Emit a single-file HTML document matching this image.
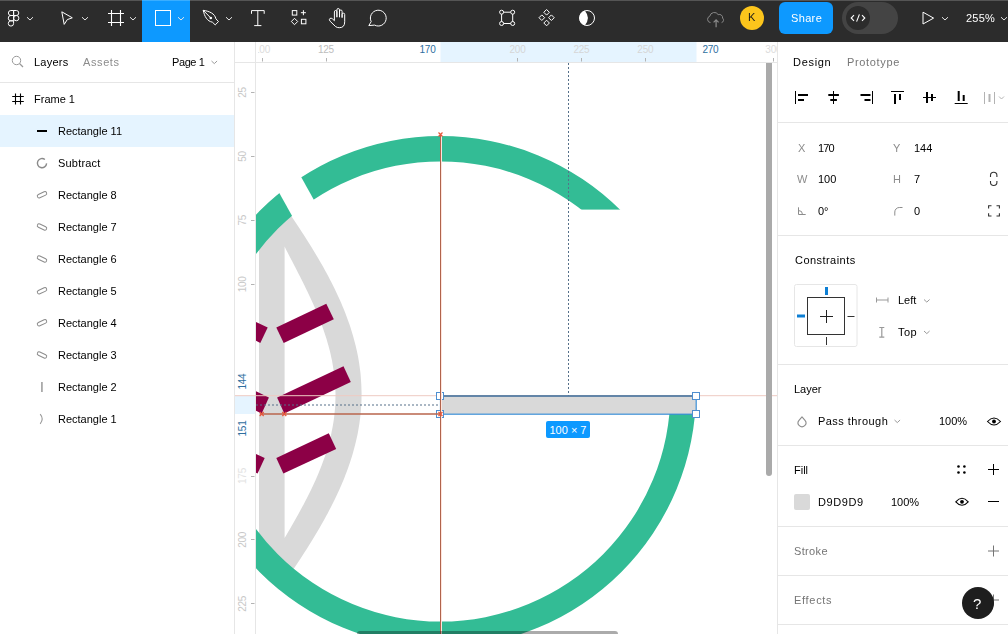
<!DOCTYPE html>
<html><head><meta charset="utf-8">
<style>
*{margin:0;padding:0;box-sizing:border-box}
html,body{width:1008px;height:634px;overflow:hidden;background:#fff;font-family:"Liberation Sans",sans-serif;font-size:11px;color:#000}
.a{position:absolute}
.t{position:absolute;white-space:pre;line-height:1;will-change:transform}
#tb{left:0;top:0;width:1008px;height:42px;background:#2c2c2c;border-top:1px solid #555}
#lp{left:0;top:42px;width:235px;height:592px;background:#fff;border-right:1px solid #e6e6e6}
#rp{left:777px;top:42px;width:231px;height:592px;background:#fff;border-left:1px solid #e6e6e6}
.div{position:absolute;height:1px;background:#e6e6e6}
.g{color:#8c8c8c}
</style></head><body>
<!-- canvas -->
<svg class="a" style="left:0;top:0" width="1008" height="634" viewBox="0 0 1008 634">
<defs>
<clipPath id="cv"><rect x="256" y="63" width="521" height="571"/></clipPath>
<clipPath id="circ"><circle cx="440.5" cy="391.5" r="255.5"/></clipPath>
<mask id="gm" maskUnits="userSpaceOnUse" x="0" y="0" width="1008" height="634">
<rect x="0" y="0" width="1008" height="634" fill="#fff"/>
<rect x="445" y="209.6" width="300" height="204.4" fill="#000"/>
<polygon points="281.66,141.94 339.98,246.82 318.28,263.02 259.96,158.14" fill="#000"/>
</mask>
</defs>
<g clip-path="url(#cv)">
<path clip-path="url(#circ)" fill="#d9d9d9" fill-rule="evenodd" d="M259,168.5 L258.8,168.5 L260.8,171.5 L262.9,174.5 L264.9,177.5 L267.0,180.5 L269.1,183.5 L271.1,186.5 L273.2,189.5 L275.2,192.5 L277.3,195.5 L279.4,198.5 L281.4,201.5 L283.5,204.5 L285.5,207.5 L287.6,210.5 L289.6,213.5 L291.6,216.5 L293.6,219.5 L295.6,222.5 L297.6,225.5 L299.6,228.5 L301.5,231.5 L303.5,234.5 L305.4,237.5 L307.3,240.5 L309.2,243.5 L311.1,246.5 L312.9,249.5 L314.7,252.5 L316.5,255.5 L318.3,258.5 L320.0,261.5 L321.8,264.5 L323.5,267.5 L325.1,270.5 L326.8,273.5 L328.4,276.5 L329.9,279.5 L331.5,282.5 L333.0,285.5 L334.5,288.5 L335.9,291.5 L337.3,294.5 L338.7,297.5 L340.1,300.5 L341.4,303.5 L342.6,306.5 L343.9,309.5 L345.1,312.5 L346.2,315.5 L347.3,318.5 L348.4,321.5 L349.5,324.5 L350.5,327.5 L351.4,330.5 L352.3,333.5 L353.2,336.5 L354.0,339.5 L354.8,342.5 L355.6,345.5 L356.3,348.5 L357.0,351.5 L357.6,354.5 L358.2,357.5 L358.7,360.5 L359.2,363.5 L359.6,366.5 L360.0,369.5 L360.4,372.5 L360.7,375.5 L360.9,378.5 L361.1,381.5 L361.3,384.5 L361.4,387.5 L361.5,390.5 L361.6,393.5 L361.5,396.5 L361.5,399.5 L361.4,402.5 L361.2,405.5 L361.0,408.5 L360.8,411.5 L360.5,414.5 L360.2,417.5 L359.8,420.5 L359.4,423.5 L358.9,426.5 L358.4,429.5 L357.9,432.5 L357.3,435.5 L356.6,438.5 L355.9,441.5 L355.2,444.5 L354.4,447.5 L353.6,450.5 L352.8,453.5 L351.9,456.5 L350.9,459.5 L350.0,462.5 L348.9,465.5 L347.9,468.5 L346.8,471.5 L345.6,474.5 L344.5,477.5 L343.3,480.5 L342.0,483.5 L340.7,486.5 L339.4,489.5 L338.0,492.5 L336.6,495.5 L335.2,498.5 L333.7,501.5 L332.2,504.5 L330.7,507.5 L329.1,510.5 L327.6,513.5 L325.9,516.5 L324.3,519.5 L322.6,522.5 L320.9,525.5 L319.2,528.5 L317.4,531.5 L315.6,534.5 L313.8,537.5 L312.0,540.5 L310.1,543.5 L308.3,546.5 L306.4,549.5 L304.4,552.5 L302.5,555.5 L300.6,558.5 L298.6,561.5 L296.6,564.5 L294.6,567.5 L292.6,570.5 L290.6,573.5 L288.6,576.5 L286.5,579.5 L284.5,582.5 L282.4,585.5 L280.4,588.5 L278.3,591.5 L276.3,594.5 L274.2,597.5 L272.1,600.5 L270.1,603.5 L268.0,606.5 L266.0,609.5 L263.9,612.5 L261.9,615.5 L259.8,618.5 L259.1,619.5 L259,619.5Z M284.6,246.5 L284.6,246.5 L286.0,249.5 L287.6,252.5 L289.1,255.5 L290.7,258.5 L292.3,261.5 L293.8,264.5 L295.4,267.5 L296.9,270.5 L298.4,273.5 L300.0,276.5 L301.5,279.5 L303.0,282.5 L304.5,285.5 L305.9,288.5 L307.4,291.5 L308.8,294.5 L310.2,297.5 L311.6,300.5 L313.0,303.5 L314.3,306.5 L315.6,309.5 L316.8,312.5 L318.1,315.5 L319.3,318.5 L320.4,321.5 L321.6,324.5 L322.7,327.5 L323.7,330.5 L324.7,333.5 L325.7,336.5 L326.7,339.5 L327.5,342.5 L328.4,345.5 L329.2,348.5 L330.0,351.5 L330.7,354.5 L331.3,357.5 L332.0,360.5 L332.5,363.5 L333.0,366.5 L333.5,369.5 L333.9,372.5 L334.3,375.5 L334.6,378.5 L334.9,381.5 L335.1,384.5 L335.3,387.5 L335.4,390.5 L335.5,393.5 L335.5,396.5 L335.4,399.5 L335.3,402.5 L335.2,405.5 L335.0,408.5 L334.7,411.5 L334.4,414.5 L334.1,417.5 L333.7,420.5 L333.2,423.5 L332.7,426.5 L332.1,429.5 L331.5,432.5 L330.9,435.5 L330.1,438.5 L329.4,441.5 L328.6,444.5 L327.7,447.5 L326.8,450.5 L325.9,453.5 L324.9,456.5 L323.8,459.5 L322.7,462.5 L321.6,465.5 L320.4,468.5 L319.2,471.5 L318.0,474.5 L316.7,477.5 L315.4,480.5 L314.0,483.5 L312.6,486.5 L311.2,489.5 L309.7,492.5 L308.2,495.5 L306.7,498.5 L305.1,501.5 L303.6,504.5 L301.9,507.5 L300.3,510.5 L298.7,513.5 L297.0,516.5 L295.3,519.5 L293.6,522.5 L291.9,525.5 L290.2,528.5 L288.4,531.5 L286.7,534.5 L284.9,537.5 L284.6,538.0 Z"/>
<g fill="#8c0046">
<polygon points="276.3,327.4 326.3,303.8 333.8,319.3 283.7,342.9"/>
<polygon points="267.7,327.4 217.7,303.8 210.2,319.3 260.3,342.9"/>
<polygon points="277.1,397.4 343.5,366.3 350.8,382 284.3,413.4"/>
<polygon points="268.9,397.4 202.5,366.3 195.2,382 261.7,413.4"/>
<polygon points="276.3,458 328.8,433.3 336.2,449 283.4,473.4"/>
<polygon points="264.7,458 212.2,433.3 204.8,449 257.6,473.4"/>
</g>
<path mask="url(#gm)" fill="#33bc95" fill-rule="evenodd" d="M185,391.5a255.5,255.5 0 1,0 511,0a255.5,255.5 0 1,0 -511,0Z M210.5,391.5a230,230 0 1,0 460,0a230,230 0 1,0 -460,0Z"/>
<rect x="440.5" y="396" width="255.5" height="18" fill="#d9d9d9"/>
</g>
</svg>


<svg class="a" style="left:0;top:0" width="1008" height="634" viewBox="0 0 1008 634" font-family="Liberation Sans" font-size="10" letter-spacing="-0.25">
<defs><clipPath id="hr"><rect x="258" y="41" width="519" height="21"/></clipPath>
<clipPath id="vr"><rect x="235" y="63" width="20" height="571"/></clipPath>
<linearGradient id="fadeL" x1="0" x2="1" y1="0" y2="0"><stop offset="0" stop-color="#fff" stop-opacity="1"/><stop offset="1" stop-color="#fff" stop-opacity="0"/></linearGradient>
</defs>
<rect x="235" y="42" width="542" height="20" fill="#fff"/>
<rect x="235" y="63" width="20" height="571" fill="#fff"/>
<rect x="440.5" y="42" width="256" height="20" fill="#e5f4ff"/>
<rect x="235" y="396" width="20" height="18" fill="#e5f4ff"/>
<line x1="235" y1="62.5" x2="777" y2="62.5" stroke="#e6e6e6"/>
<line x1="255.5" y1="41" x2="255.5" y2="634" stroke="#e6e6e6"/>
<g clip-path="url(#hr)">
<text x="262" y="53" text-anchor="middle" fill="#dcdcdc">100</text><text x="325.9" y="53" text-anchor="middle" fill="#bdbdbd">125</text><text x="517.5" y="53" text-anchor="middle" fill="#d6d6d6">200</text><text x="581.4" y="53" text-anchor="middle" fill="#d6d6d6">225</text><text x="645.3" y="53" text-anchor="middle" fill="#d6d6d6">250</text><text x="773.3" y="53" text-anchor="middle" fill="#dcdcdc">300</text><text x="435.5" y="53" text-anchor="end" fill="#2f6f9f">170</text><text x="702.5" y="53" fill="#2f6f9f">270</text><g stroke="#b3b3b3"><line x1="262.5" y1="58" x2="262.5" y2="61.5"/><line x1="326.5" y1="58" x2="326.5" y2="61.5"/><line x1="517.5" y1="58" x2="517.5" y2="61.5"/><line x1="581.5" y1="58" x2="581.5" y2="61.5"/><line x1="645.5" y1="58" x2="645.5" y2="61.5"/><line x1="773.5" y1="58" x2="773.5" y2="61.5"/></g></g>
<g clip-path="url(#vr)"><text transform="translate(246,92.5) rotate(-90)" x="0" y="0" text-anchor="middle" fill="#c8c8c8">25</text><text transform="translate(246,156.4) rotate(-90)" x="0" y="0" text-anchor="middle" fill="#c8c8c8">50</text><text transform="translate(246,220.3) rotate(-90)" x="0" y="0" text-anchor="middle" fill="#c8c8c8">75</text><text transform="translate(246,284.3) rotate(-90)" x="0" y="0" text-anchor="middle" fill="#c8c8c8">100</text><text transform="translate(246,476) rotate(-90)" x="0" y="0" text-anchor="middle" fill="#e3e3e3">175</text><text transform="translate(246,539.9) rotate(-90)" x="0" y="0" text-anchor="middle" fill="#c8c8c8">200</text><text transform="translate(246,603.8) rotate(-90)" x="0" y="0" text-anchor="middle" fill="#c8c8c8">225</text><text transform="translate(246,389.5) rotate(-90)" fill="#2f6f9f">144</text><text transform="translate(246,420.5) rotate(-90)" text-anchor="end" fill="#2f6f9f">151</text><g stroke="#b3b3b3"><line x1="251" y1="92.5" x2="254.5" y2="92.5"/><line x1="251" y1="156.5" x2="254.5" y2="156.5"/><line x1="251" y1="220.5" x2="254.5" y2="220.5"/><line x1="251" y1="284.5" x2="254.5" y2="284.5"/><line x1="251" y1="476.5" x2="254.5" y2="476.5"/><line x1="251" y1="539.5" x2="254.5" y2="539.5"/><line x1="251" y1="603.5" x2="254.5" y2="603.5"/></g></g>
</svg>
<!-- guides overlay -->
<svg class="a" style="left:0;top:0" width="1008" height="634" viewBox="0 0 1008 634">
<defs><clipPath id="cv2"><rect x="234" y="63" width="543" height="571"/></clipPath></defs>
<g clip-path="url(#cv2)">
<line x1="234" y1="395.7" x2="777" y2="395.7" stroke="#eecac2" stroke-width="1"/>
<line x1="256" y1="405" x2="440" y2="405" stroke="#56708a" stroke-width="1.1" stroke-dasharray="2,2"/>
<line x1="568.5" y1="63" x2="568.5" y2="396" stroke="#56708a" stroke-width="1" stroke-dasharray="2,2"/>
<rect x="440.5" y="396" width="255.7" height="18.2" fill="none" stroke="#3b8fd6" stroke-width="1.2"/>
<line x1="440.5" y1="396" x2="696" y2="396" stroke="#5a7898" stroke-width="1.3"/>
<g fill="#fff" stroke="#4f8fd0" stroke-width="1">
<rect x="436.5" y="392.5" width="7" height="7"/>
<rect x="436.5" y="410.5" width="7" height="7"/>
<rect x="692.5" y="392.5" width="7" height="7"/>
<rect x="692.5" y="410.5" width="7" height="7"/>
</g>
<line x1="440.5" y1="134" x2="440.5" y2="634" stroke="#b0634c" stroke-width="1"/>
<line x1="441.5" y1="134" x2="441.5" y2="634" stroke="#ffe4dc" stroke-width="1"/>
<line x1="260" y1="414" x2="440" y2="414" stroke="#b8654c" stroke-width="1.4"/>
<g stroke="#e8553a" stroke-width="1.2">
<path d="M438.5,132.5l4,4M442.5,132.5l-4,4"/>
<path d="M438.5,412l4,4M442.5,412l-4,4"/>
<path d="M259.7,412l4,4M263.7,412l-4,4"/>
<path d="M282.3,412l4,4M286.3,412l-4,4"/>
</g>
</g>
<rect x="546" y="421" width="44" height="17" rx="2" fill="#0d99ff"/>
<text x="568" y="434" text-anchor="middle" font-family="Liberation Sans" font-size="11" fill="#fff">100 × 7</text>
<!-- scrollbars -->
<path d="M766,63H772V473A3,3 0 0 1 766,473Z" fill="#aaaaaa"/>
<rect x="357" y="631" width="261" height="6" rx="3" fill="#000" fill-opacity="0.33"/>
</svg>
<div id="tb" class="a">
<div class="a" style="left:142px;top:-1px;width:48px;height:42px;background:#0d99ff;border-top:1px solid #3aaeff"></div>
<div class="a" style="left:779px;top:1px;width:54px;height:32px;background:#0d99ff;border-radius:6px"></div>
<div class="t" style="left:791.2px;top:12px;font-size:11px;color:#fff;letter-spacing:0.35px">Share</div>
<div class="a" style="left:842px;top:1px;width:56px;height:32px;background:#444;border-radius:16px"></div>
<div class="a" style="left:846px;top:5px;width:24px;height:24px;background:#2c2c2c;border-radius:12px"></div>
<div class="a" style="left:740px;top:5px;width:24px;height:24px;background:#fcc51c;border-radius:12px"></div>
<div class="t" style="left:748px;top:11px;font-size:11px;color:#1a1a1a">K</div>
<div class="t" style="left:966px;top:12px;font-size:11px;color:#fff;letter-spacing:0.2px">255%</div>
</div>
<svg class="a" style="left:0;top:0" width="1008" height="41" viewBox="0 0 1008 41" fill="none" stroke="#fff" stroke-width="1">
<!-- figma logo -->
<path d="M13.6,10.5H10.9a2.5,2.5 0 0 0 0,5H13.6ZM13.6,10.5H16.3a2.5,2.5 0 0 1 0,5H13.6ZM13.6,15.5H10.9a2.65,2.65 0 0 0 0,5.3H13.6ZM13.6,20.8H10.9a2.65,2.65 0 1 0 2.7,2.65ZM16.25,18.15m-2.65,0a2.65,2.65 0 1 0 5.3,0a2.65,2.65 0 1 0 -5.3,0"/>
<g stroke="#e6e6e6">
<path d="M27,17.2l3,2.8l3,-2.8"/>
<path d="M82,17.2l3,2.8l3,-2.8"/>
<path d="M130,17.2l3,2.8l3,-2.8"/>
<path d="M178,17.2l3,2.8l3,-2.8"/>
<path d="M226,17.2l3,2.8l3,-2.8"/>
<path d="M942,17.2l3,2.8l3,-2.8"/>
<path d="M1001,17.2l3,2.8l3,-2.8"/>
</g>
<!-- move -->
<path d="M61.8,11.8L72.3,17.8L67.3,19.6L64.2,24.4Z" stroke-linejoin="miter"/>
<!-- frame -->
<path d="M111.5,10v16M120.5,10v16M108,13.5h16M108,22.5h16" stroke-width="1.1"/>
<!-- rect -->
<rect x="155.5" y="10.5" width="15" height="15"/>
<!-- pen -->
<path d="M203.2,10.3C209.5,11.3 214.8,13.5 215.9,18.8L218.5,21.6L215.2,24.9L212.4,22.2C207.2,21.2 204.5,16.5 203.2,10.3Z"/>
<path d="M203.2,10.3L210.8,18"/>
<circle cx="210.8" cy="18" r="1.3" fill="#fff" stroke="none"/>
<!-- T -->
<path d="M251.5,13.8V10.6H264.2V13.8M257.8,10.6V25.6M254.2,25.6H261.4"/>
<!-- shapes -->
<rect x="292.3" y="10.6" width="4.5" height="4.5"/>
<path d="M303.4,10.2v5M300.9,12.7h5"/>
<path d="M294.5,18.3L297.7,21.5L294.5,24.7L291.3,21.5Z"/>
<rect x="301.4" y="19.3" width="4.5" height="4.5"/>
<!-- hand -->
<path d="M335.6,26.6L330.2,21.3Q328.6,19.6 329.9,18.5Q331.1,17.6 332.5,18.9L334.4,20.7V11.9Q334.4,10.5 335.6,10.5Q336.9,10.5 336.9,11.9V17.2V9.9Q336.9,8.5 338.2,8.5Q339.5,8.5 339.5,9.9V17.2V11.3Q339.5,10 340.8,10Q342.1,10 342.1,11.3V17.6V14.5Q342.1,13.2 343.4,13.2Q344.7,13.2 344.7,14.5V21.8Q344.7,27.7 339.3,27.7Q337.2,27.7 335.6,26.6Z" stroke-linejoin="round"/>
<!-- comment -->
<path d="M368.8,25.6L371.2,21.6A7.9,7.9 0 1 1 374.6,25.1Z"/>
<!-- transform -->
<path d="M501.6,12.2H512.7V23.5H501.6Z"/>
<g fill="#2c2c2c"><circle cx="501.6" cy="12.2" r="2"/><circle cx="512.7" cy="12.2" r="2"/><circle cx="501.6" cy="23.5" r="2"/><circle cx="512.7" cy="23.5" r="2"/></g>
<!-- components -->
<path d="M546.6,9.5l2.8,2.8l-2.8,2.8l-2.8,-2.8ZM541.8,14.9l2.8,2.8l-2.8,2.8l-2.8,-2.8ZM551.4,14.9l2.8,2.8l-2.8,2.8l-2.8,-2.8ZM546.6,20.2l2.8,2.8l-2.8,2.8l-2.8,-2.8Z"/>
<!-- contrast -->
<circle cx="587" cy="18" r="7.5"/>
<path d="M584.9,10.8A7.5,7.5 0 0 0 584.9,25.2Q590.9,18 584.9,10.8Z" fill="#fff" stroke="none"/>
<!-- cloud -->
<path d="M710.5,22.6A3.3,3.3 0 0 1 709.8,16.2A4.6,4.6 0 0 1 718.2,14.6A3.3,3.3 0 0 1 722.6,18.1A2.6,2.6 0 0 1 721.6,22.6" stroke="#8a8a8a"/>
<path d="M716.1,27.2V20.2M713.6,22.4L716.1,19.8L718.6,22.4" stroke="#8a8a8a" stroke-width="1.2"/>
<!-- code -->
<path d="M854,15.2l-2.8,2.8l2.8,2.8M862,15.2l2.8,2.8l-2.8,2.8M859.4,14.4l-2.8,7.2" stroke-width="1.1"/>
<!-- play -->
<path d="M923,12.2V24L933.6,18.1Z"/>
</svg>

<div id="lp" class="a">
<div class="div" style="left:0;top:40px;width:234px"></div>
<div class="a" style="left:0;top:73px;width:234px;height:32px;background:#e5f4ff"></div>
</div>
<div class="t" style="left:33.5px;top:57px;color:#000;letter-spacing:0.25px">Layers</div>
<div class="t" style="left:82.5px;top:57px;color:#8c8c8c;letter-spacing:0.6px">Assets</div>
<div class="t" style="left:172.0px;top:57px;color:#000;letter-spacing:-0.4px">Page 1</div>
<div class="t" style="left:33.5px;top:94.3px;color:#000">Frame 1</div>
<div class="t" style="left:57.6px;top:126.3px;color:#000">Rectangle 11</div>
<div class="t" style="left:57.6px;top:158.3px;color:#000;letter-spacing:0.2px">Subtract</div>
<div class="t" style="left:57.6px;top:190.3px;color:#000">Rectangle 8</div>
<div class="t" style="left:57.6px;top:222.3px;color:#000">Rectangle 7</div>
<div class="t" style="left:57.6px;top:254.3px;color:#000">Rectangle 6</div>
<div class="t" style="left:57.6px;top:286.3px;color:#000">Rectangle 5</div>
<div class="t" style="left:57.6px;top:318.3px;color:#000">Rectangle 4</div>
<div class="t" style="left:57.6px;top:350.3px;color:#000">Rectangle 3</div>
<div class="t" style="left:57.6px;top:382.3px;color:#000">Rectangle 2</div>
<div class="t" style="left:57.6px;top:414.3px;color:#000">Rectangle 1</div>
<svg class="a" style="left:0;top:41px" width="234" height="400" viewBox="0 41 234 400" fill="none" stroke="#8c8c8c" stroke-width="1">
<circle cx="16.5" cy="60.5" r="4.2" stroke="#999"/>
<path d="M19.5,63.5L23,67" stroke="#999" stroke-width="1.3"/>
<path d="M211.5,61l2.8,2.6l2.8,-2.6" stroke="#999"/>
<path d="M15.5,93.5v11M20.5,93.5v11M12.2,96.5h11.6M12.2,101.5h11.6" stroke="#000" stroke-width="1.1"/>
<rect x="37" y="130" width="10" height="2" fill="#000" stroke="none"/>
<path d="M46.6,163.4A4.6,4.6 0 1 1 44.9,159.5" stroke="#8a8a8a" stroke-width="1.4"/>
<g transform="translate(42,194.8) rotate(-25)"><rect x="-5" y="-1.8" width="10" height="3.6" rx="1.8"/></g>
<g transform="translate(42,227) rotate(25)"><rect x="-5" y="-1.8" width="10" height="3.6" rx="1.8"/></g>
<g transform="translate(42,259) rotate(25)"><rect x="-5" y="-1.8" width="10" height="3.6" rx="1.8"/></g>
<g transform="translate(42,290.8) rotate(-25)"><rect x="-5" y="-1.8" width="10" height="3.6" rx="1.8"/></g>
<g transform="translate(42,322.8) rotate(-25)"><rect x="-5" y="-1.8" width="10" height="3.6" rx="1.8"/></g>
<g transform="translate(42,355) rotate(25)"><rect x="-5" y="-1.8" width="10" height="3.6" rx="1.8"/></g>
<rect x="41" y="382" width="1.8" height="10" fill="#aaa" stroke="none"/>
<path d="M40.2,414.2Q44.2,419 40.2,423.8" stroke="#999" stroke-width="1.1"/>
</svg>

<div id="rp" class="a"></div>
<div class="div" style="left:778px;top:122px;width:230px"></div>
<div class="div" style="left:778px;top:235px;width:230px"></div>
<div class="div" style="left:778px;top:364px;width:230px"></div>
<div class="div" style="left:778px;top:445px;width:230px"></div>
<div class="div" style="left:778px;top:526px;width:230px"></div>
<div class="div" style="left:778px;top:575px;width:230px"></div>
<div class="div" style="left:778px;top:624px;width:230px"></div>
<div class="t" style="left:793.4px;top:57px;color:#000;letter-spacing:0.7px">Design</div>
<div class="t" style="left:846.8px;top:57px;color:#777;letter-spacing:0.65px">Prototype</div>
<div class="t" style="left:797.6px;top:142.6px;color:#8c8c8c;">X</div>
<div class="t" style="left:817.5px;top:142.6px;color:#000;letter-spacing:-0.9px">170</div>
<div class="t" style="left:893.3px;top:142.6px;color:#8c8c8c;">Y</div>
<div class="t" style="left:914.0px;top:142.6px;color:#000;">144</div>
<div class="t" style="left:796.6px;top:174px;color:#8c8c8c;">W</div>
<div class="t" style="left:817.5px;top:174px;color:#000;">100</div>
<div class="t" style="left:893.3px;top:174px;color:#8c8c8c;">H</div>
<div class="t" style="left:913.6px;top:174px;color:#000;">7</div>
<div class="t" style="left:817.5px;top:206px;color:#000;">0°</div>
<div class="t" style="left:913.6px;top:206px;color:#000;">0</div>
<div class="t" style="left:794.6px;top:255px;color:#000;letter-spacing:0.45px">Constraints</div>
<div class="t" style="left:897.6px;top:295px;color:#000;">Left</div>
<div class="t" style="left:897.6px;top:326.7px;color:#000;letter-spacing:0.5px">Top</div>
<div class="t" style="left:793.7px;top:384.3px;color:#000;">Layer</div>
<div class="t" style="left:817.5px;top:416px;color:#000;letter-spacing:0.45px">Pass through</div>
<div class="t" style="left:938.5px;top:416px;color:#000;">100%</div>
<div class="t" style="left:793.7px;top:465px;color:#000;">Fill</div>
<div class="t" style="left:817.5px;top:496.5px;color:#000;letter-spacing:0.6px">D9D9D9</div>
<div class="t" style="left:891.0px;top:496.5px;color:#000;">100%</div>
<div class="t" style="left:793.7px;top:546px;color:#757575;letter-spacing:0.35px">Stroke</div>
<div class="t" style="left:793.7px;top:595px;color:#757575;letter-spacing:0.7px">Effects</div>
<svg class="a" style="left:777px;top:41px" width="231" height="593" viewBox="777 41 231 593" fill="none" stroke="#000" stroke-width="1">
<!-- align -->
<path d="M795.5,91v13M798,95h10M798,100h6" stroke-width="1"/>

<g stroke-width="2"><path d="M798,95h10M798,100h6"/></g>
<path d="M833.5,91v13" /><path d="M828.3,95h10.6M830.3,100h6.6" stroke-width="2"/>
<path d="M872.5,91v13" /><path d="M860.5,95h10M864.5,100h6" stroke-width="2"/>
<path d="M891,91.5h13" /><path d="M895,94v10M900,94v6" stroke-width="2"/>
<path d="M923,97.5h13" /><path d="M927,92v11M932,94v7" stroke-width="2"/>
<path d="M954.7,103.5h13" /><path d="M958.7,91v10M963.7,95v6" stroke-width="2"/>
<g stroke="#b3b3b3"><path d="M984.5,92v12M994.5,92v12" /><path d="M989.5,94v8" stroke-width="2"/><path d="M999,96.5l2.5,2.5l2.5,-2.5"/></g>
<!-- constrain proportions -->
<path d="M990.5,177V175.5A3.2,3.2 0 0 1 996.9,175.5V177M990.5,181V182.3A3.2,3.2 0 0 0 996.9,182.3V181" stroke="#333" stroke-width="1.1"/>
<!-- rotation -->
<path d="M798.5,207.3V214.5H805.7M798.5,210.5A4,4 0 0 1 802.5,214.5" stroke="#8c8c8c"/>
<!-- corner radius -->
<path d="M894.8,215.6V212A4.5,4.5 0 0 1 899.3,207.5H902.5" stroke="#8c8c8c"/>
<!-- independent corners -->
<path d="M988.6,208.5V205.8H991.5M996.5,205.8H999.4V208.5M999.4,213.3V216H996.5M991.5,216H988.6V213.3" stroke="#333" stroke-width="1.1"/>
<!-- constraints box -->
<rect x="794.5" y="284.5" width="62.5" height="62" rx="2" stroke="#e6e6e6"/>
<rect x="807.5" y="297.5" width="37" height="37" stroke="#333"/>
<path d="M826.5,310v13M820,316.5h13" stroke="#222"/>
<path d="M826.5,287v8" stroke="#0d7fd4" stroke-width="3"/>
<path d="M797,316h8" stroke="#0d7fd4" stroke-width="3"/>
<path d="M847.5,316.5h7M826.5,337v8" stroke="#333"/>
<path d="M876.5,297.5v5M888,297.5v5M876.5,300h11.5" stroke="#999"/>
<path d="M881.8,327v10.6M879.3,327.5h5M879.3,337.1h5" stroke="#999" stroke-width="1.2"/>
<path d="M924,299.5l2.8,2.6l2.8,-2.6M924,331l2.8,2.6l2.8,-2.6M894.5,420l2.8,2.6l2.8,-2.6" stroke="#999"/>
<!-- drop -->
<path d="M802,416.8L805,420.3A3.9,3.9 0 1 1 799,420.3Z" stroke="#8c8c8c" stroke-width="1.1" stroke-linejoin="round"/>
<!-- eye -->
<path d="M987.5,421.5Q994,414.5 1000.5,421.5Q994,428.5 987.5,421.5Z" stroke-width="1.1"/>
<circle cx="994" cy="421.5" r="1.9" fill="#000" stroke="none"/>
<path d="M955.8,501.8Q962,494.8 968.2,501.8Q962,508.8 955.8,501.8Z" stroke-width="1.1"/>
<circle cx="962" cy="501.8" r="1.9" fill="#000" stroke="none"/>
<!-- dots -->
<g fill="#000" stroke="none"><circle cx="958.5" cy="466.5" r="1.3"/><circle cx="964.4" cy="466.5" r="1.3"/><circle cx="958.5" cy="472.5" r="1.3"/><circle cx="964.4" cy="472.5" r="1.3"/></g>
<path d="M993.5,464v11M988,469.5h11M988,501.5h11"/>
<path d="M993.5,545.5v11M988,551h11M993.5,594.5v11M988,600h11" stroke="#757575"/>
<!-- swatch -->
<rect x="794" y="494" width="16" height="16" rx="2" fill="#d9d9d9" stroke="none"/>
<!-- help -->
<circle cx="978" cy="603" r="16" fill="#1e1e1e" stroke="none"/>
</svg>
<div class="t" style="left:973px;top:596px;font-size:15px;color:#fff">?</div>

</body></html>
